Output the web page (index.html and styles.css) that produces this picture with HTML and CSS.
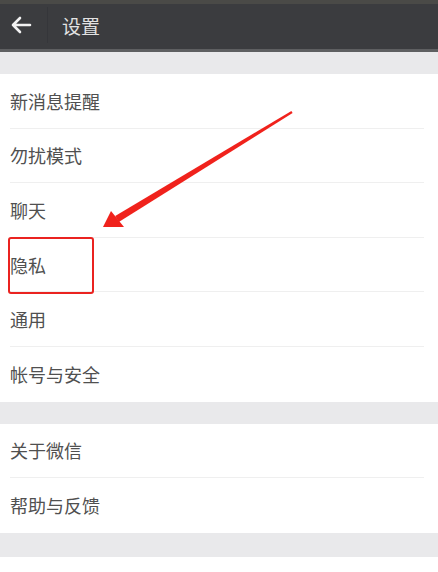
FILE: index.html
```html
<!DOCTYPE html>
<html lang="zh-CN">
<head>
<meta charset="utf-8">
<title>设置</title>
<link rel="stylesheet" href="styles.css">
</head>
<body>
<div class="screen">
  <header class="topbar">
    <div class="back">
      <svg width="22" height="18" viewBox="0 0 22 18"><path d="M20 9H3M10 2L3 9l7 7" fill="none" stroke="#f2f2f2" stroke-width="2.6" stroke-linecap="round" stroke-linejoin="round"/></svg>
    </div>
    <div class="title">设置</div>
  </header>
  <div class="gap"></div>
  <ul class="group">
    <li class="row">新消息提醒</li>
    <li class="row">勿扰模式</li>
    <li class="row">聊天</li>
    <li class="row">隐私</li>
    <li class="row">通用</li>
    <li class="row">帐号与安全</li>
  </ul>
  <div class="gap"></div>
  <ul class="group">
    <li class="row">关于微信</li>
    <li class="row">帮助与反馈</li>
  </ul>
  <div class="gap gap-last"></div>
  <div class="tail"></div>

  <div class="highlight"></div>
  <svg class="arrow" width="438" height="572" viewBox="0 0 438 572">
    <polygon points="292.6,113 291.4,111 115.2,216 118.8,222" fill="#f0221c"/>
    <polygon points="103,227 111,211 124,227" fill="#f0221c"/>
  </svg>
</div>
</body>
</html>
```

FILE: styles.css
```css
* { box-sizing: border-box; }
html, body { margin: 0; padding: 0; background: #fff; }
body { font-family: "Noto Sans CJK SC", "Noto Sans", sans-serif; }
.screen { position: relative; width: 438px; height: 572px; overflow: hidden; background: #fff; }
.topbar {
  height: 52px;
  background: #3b3c3f;
  border-top: 4px solid #4a4a47;
  border-bottom: 3px solid #5e5f61;
  display: flex;
  align-items: center;
  padding-bottom: 3px;
}
.back {
  width: 48px;
  height: 36px;
  display: flex;
  align-items: center;
  padding-left: 10px;
  border-right: 1px solid #35363a;
}
.title {
  margin-left: 14px;
  color: #e2e2e2;
  font-size: 19px;
  line-height: 1;
}
.gap { height: 22px; background: #e9e9eb; }
.gap-last { height: 24px; }
.group { list-style: none; margin: 0; padding: 0; background: #fff; }
.row {
  height: 54.6px;
  display: flex;
  align-items: center;
  padding-left: 10px;
  padding-bottom: 1px;
  font-size: 18px;
  color: #505050;
  position: relative;
}
.row:not(:last-child)::after {
  content: "";
  position: absolute;
  left: 10px;
  right: 14px;
  bottom: 0;
  height: 1px;
  background: #efefef;
}
.tail { height: 20px; background: #fff; }
.highlight {
  position: absolute;
  left: 8px;
  top: 237px;
  width: 86px;
  height: 57px;
  border: 2px solid #ea2320;
  border-radius: 3px;
}
.arrow { position: absolute; left: 0; top: 0; }
```
